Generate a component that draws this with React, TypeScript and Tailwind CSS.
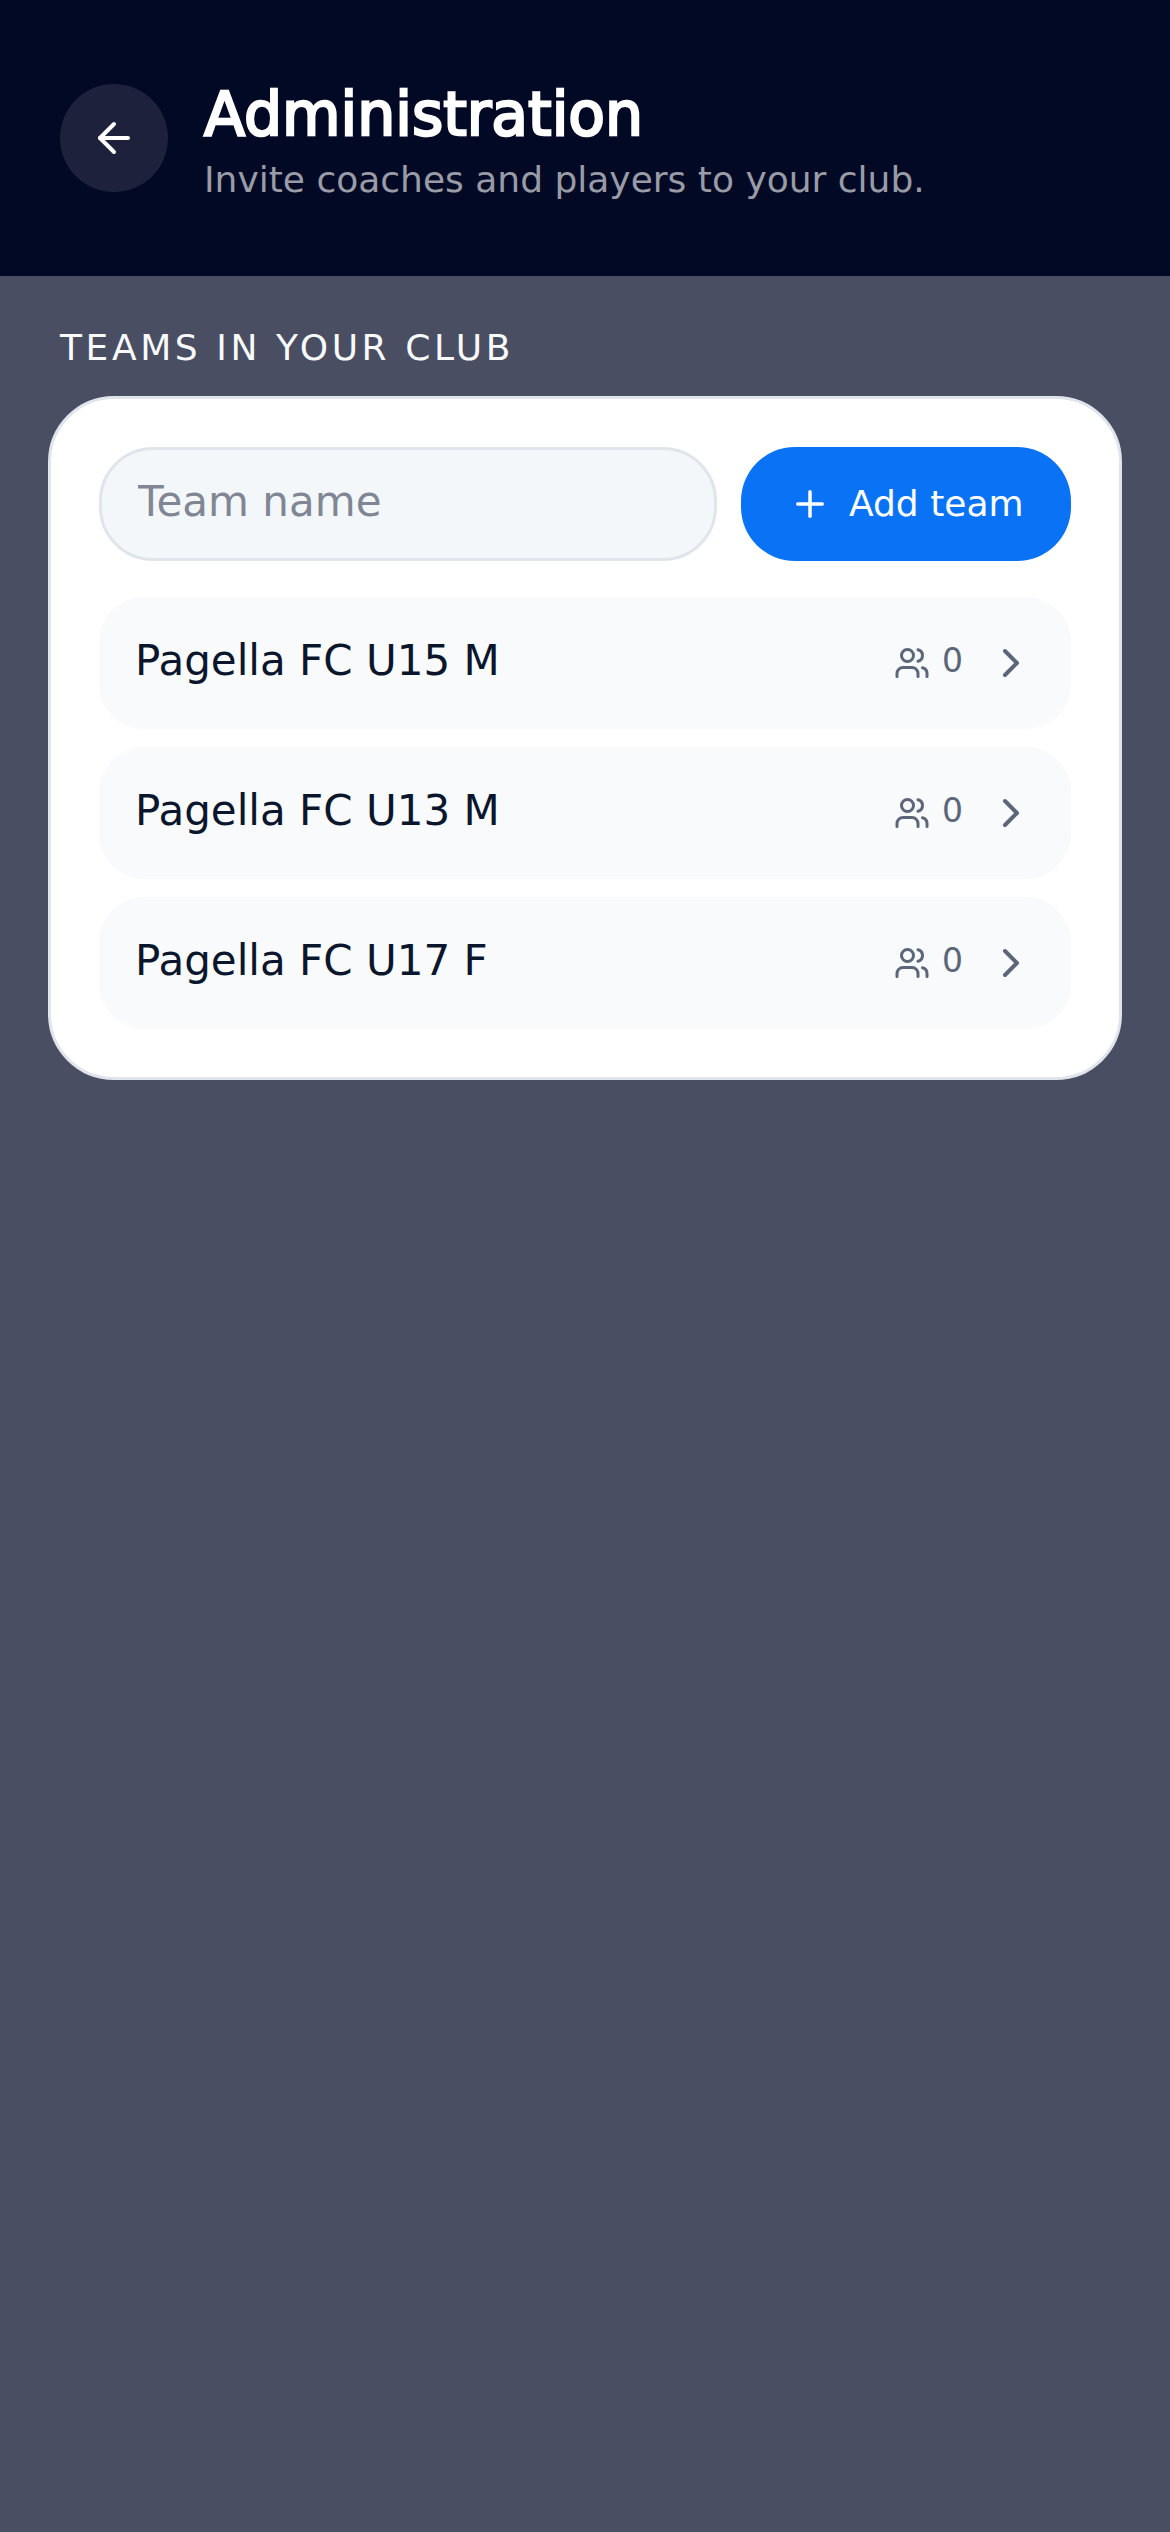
import { useState } from "react";
import { ArrowLeft, ChevronRight, Plus, Users } from "lucide-react";

type Team = {
  name: string
  members: number
}

const initialTeams: Team[] = [
  { name: "Pagella FC U15 M", members: 0 },
  { name: "Pagella FC U13 M", members: 0 },
  { name: "Pagella FC U17 F", members: 0 },
];

function Header() {
  return (
    <header className="flex h-[276px] items-start gap-9 bg-[#020924] px-[60px]">
      <button
        aria-label="Back"
        className="mt-[84px] flex size-[108px] shrink-0 items-center justify-center rounded-full bg-[#1d213b]"
      >
        <ArrowLeft size={48} />
      </button>
      <div className="pt-[78px]">
        <h1 className="text-[60px] leading-[72px] [-webkit-text-stroke:2.5px_white]">
          Administration
        </h1>
        <p className="mt-1.5 text-[36px] leading-[48px] text-[#999ca7]">
          Invite coaches and players to your club.
        </p>
      </div>
    </header>
  );
}

function TeamRow({ name, members }: Team) {
  return (
    <li className="flex h-[132px] items-center rounded-[45px] bg-[#f8fafc] px-9">
      <span className="flex-1 pb-[5px] text-[42px] leading-[54px] text-[#0b162d]">{name}</span>
      <span className="flex items-center gap-3 text-[#5b6679]">
        <Users size={36} />
        <span className="pb-[5px] text-[33px] leading-[42px]">{members}</span>
      </span>
      <ChevronRight size={48} className="ml-6 text-[#5b6679]" />
    </li>
  );
}

export default function App() {
  const [teams, setTeams] = useState<Team[]>(initialTeams);
  const [name, setName] = useState("");

  const addTeam = () => {
    if (!name.trim()) return
    setTeams((prev) => [...prev, { name: name.trim(), members: 0 }]);
    setName("");
  };

  return (
    <div className="min-h-[2532px] w-[1170px] bg-[#4a4e63] font-['DejaVu_Sans',sans-serif] text-white">
      <Header />
      <main className="px-12 pt-12">
        <h2 className="px-3 text-[36px] leading-[48px] tracking-[3.6px] text-[#f8fafc] uppercase">
          Teams in your club
        </h2>
        <section className="mt-6 rounded-[66px] border-[3px] border-[#e0e5ec] bg-white p-12">
          <div className="flex gap-6">
            <input
              value={name}
              onChange={(event) => setName(event.target.value)}
              placeholder="Team name"
              className="h-[114px] min-w-0 flex-1 rounded-[54px] border-[3px] border-[#e0e5ec] bg-[#f3f7fa] px-9 pb-[5px] text-[42px] text-[#0b162d] placeholder:text-[#808694]"
            />
            <button
              onClick={addTeam}
              className="flex h-[114px] w-[330px] items-center gap-[18px] rounded-[54px] bg-[#0a73f5] pl-12 text-[36px] whitespace-nowrap"
            >
              <Plus size={42} />
              Add team
            </button>
          </div>
          <ul className="mt-9 flex flex-col gap-[18px]">
            {teams.map((team) => (
              <TeamRow key={team.name} {...team} />
            ))}
          </ul>
        </section>
      </main>
    </div>
  );
}
